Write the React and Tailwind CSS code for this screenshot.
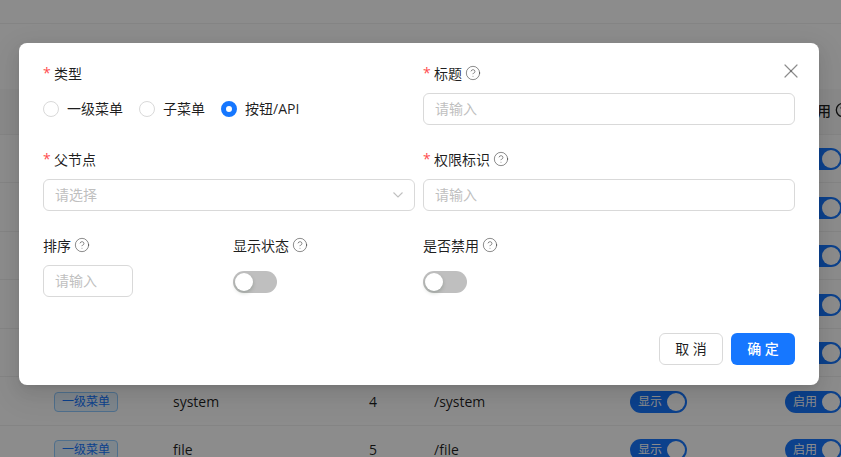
import React from 'react';
import { CircleHelp, X } from 'lucide-react';

const rows = [
  { tag: '一级菜单', name: 'dashboard', sort: 1, path: '/dashboard' },
  { tag: '一级菜单', name: 'user', sort: 1, path: '/user' },
  { tag: '一级菜单', name: 'role', sort: 2, path: '/role' },
  { tag: '一级菜单', name: 'menu', sort: 3, path: '/menu' },
  { tag: '一级菜单', name: 'log', sort: 3, path: '/log' },
  { tag: '一级菜单', name: 'system', sort: 4, path: '/system' },
  { tag: '一级菜单', name: 'file', sort: 5, path: '/file' },
];

function Help() {
  return <CircleHelp size={16} strokeWidth={1.5} className="ml-[3px] shrink-0 text-[#00000073]" />;
}

function Label({ text, required, help }) {
  return (
    <div className="flex items-center h-[22px] pb-[2px] mb-2 text-[14px] text-[#000000e0]">
      {required && <span className="mr-[4px] w-[7px] text-[14px] text-[#ff4d4f] leading-none">*</span>}
      <span>{text}</span>
      {help && <Help />}
    </div>
  );
}

function TextInput({ className = 'w-full' }) {
  return (
    <input
      placeholder="请输入"
      className={`${className} block h-8 px-[11px] pb-[2px] text-[14px] bg-white border border-[#d9d9d9] rounded-md outline-none placeholder:text-[#bfbfbf]`}
    />
  );
}

function Radio({ label, checked }) {
  return (
    <label className="flex items-center h-8 mr-4 text-[14px] text-[#000000e0]">
      {checked ? (
        <span className="w-4 h-4 rounded-full border-[5px] border-[#1677ff] bg-white" />
      ) : (
        <span className="w-4 h-4 rounded-full border border-[#d9d9d9] bg-white" />
      )}
      <span className="pl-2 pb-[2px]">{label}</span>
    </label>
  );
}

function OffSwitch() {
  return (
    <div className="flex items-center h-8 pt-[2px]">
      <div className="w-11 h-[22px] p-[2px] rounded-full bg-[#bfbfbf]">
        <div className="w-[18px] h-[18px] rounded-full bg-white shadow-[0_2px_4px_0_rgba(0,35,11,0.2)]" />
      </div>
    </div>
  );
}

function OnSwitch({ text }) {
  return (
    <div className="flex items-center justify-between w-[57px] h-[22px] pl-2 pr-[2px] rounded-full bg-[#1677ff] text-[12px] text-white">
      <span>{text}</span>
      <span className="w-[18px] h-[18px] rounded-full bg-white" />
    </div>
  );
}

function TableRow({ row }) {
  return (
    <div className="grid grid-cols-[173px_196px_65px_196px_155px_1fr] items-center h-[48.5px] pt-[2px] border-b border-[#f0f0f0] text-[14px] text-[#000000e0]">
      <div className="pl-[54px]">
        <span className="flex items-center justify-center w-16 h-5 rounded border border-[#91caff] bg-[#e6f4ff] text-[12px] text-[#1677ff]">
          {row.tag}
        </span>
      </div>
      <div className="leading-[22px]">{row.name}</div>
      <div className="leading-[22px]">{row.sort}</div>
      <div className="leading-[22px]">{row.path}</div>
      <OnSwitch text="显示" />
      <OnSwitch text="启用" />
    </div>
  );
}

export default function App() {
  return (
    <div
      className="relative w-[841px] h-[457px] overflow-hidden bg-white"
      style={{ fontFamily: '"Open Sans", "Noto Sans CJK SC", sans-serif' }}
    >
      {/* page behind the dialog */}
      <div className="h-6 border-b border-[#f0f0f0]" />
      <div className="h-[65px]" />
      <div className="flex items-center justify-end h-[45.5px] pb-[2px] border-b border-[#f0f0f0] bg-[#fafafa] text-[14px] font-medium text-[#000000e0]">
        <span className="whitespace-nowrap translate-x-[10px]">启用</span>
        <CircleHelp size={16} className="ml-1 shrink-0 translate-x-[10px]" />
      </div>
      {rows.map((row) => (
        <TableRow key={row.name} row={row} />
      ))}

      {/* mask + dialog */}
      <div className="absolute inset-0 bg-[#00000073] pl-[19px] pt-[43px]">
        <div className="relative w-[800px] h-[342px] px-6 py-5 rounded-lg bg-white shadow-[0_6px_16px_0_rgba(0,0,0,0.08),0_3px_6px_-4px_rgba(0,0,0,0.12),0_9px_28px_8px_rgba(0,0,0,0.05)]">
          <X size={24} strokeWidth={1.2} className="absolute top-4 right-4 text-[#00000073]" />

          <div className="grid grid-cols-[380px_372px]">
            <div className="pr-2 mb-6">
              <Label text="类型" required />
              <div className="flex items-center">
                <Radio label="一级菜单" />
                <Radio label="子菜单" />
                <Radio label="按钮/API" checked />
              </div>
            </div>
            <div className="mb-6">
              <Label text="标题" required help />
              <TextInput />
            </div>
            <div className="pr-2 mb-6">
              <Label text="父节点" required />
              <div className="flex items-center justify-between h-8 pl-[11px] pr-[10px] bg-white border border-[#d9d9d9] rounded-md text-[14px] text-[#bfbfbf]">
                <span className="pb-[2px]">请选择</span>
                <svg width="12" height="12" viewBox="0 0 12 12" fill="none" stroke="#00000040" strokeWidth="1.1">
                  <path d="M1.5 3.5 L6 8 L10.5 3.5" />
                </svg>
              </div>
            </div>
            <div className="mb-6">
              <Label text="权限标识" required help />
              <TextInput />
            </div>
          </div>

          <div className="grid grid-cols-[190px_190px_190px]">
            <div>
              <Label text="排序" help />
              <TextInput className="w-[90px]" />
            </div>
            <div>
              <Label text="显示状态" help />
              <OffSwitch />
            </div>
            <div>
              <Label text="是否禁用" help />
              <OffSwitch />
            </div>
          </div>

          <div className="mt-9 flex justify-end gap-2">
            <button className="w-16 h-8 pb-[2px] rounded-md border border-[#d9d9d9] bg-white text-[14px] text-[#000000e0]">取 消</button>
            <button className="w-16 h-8 pb-[2px] rounded-md bg-[#1677ff] text-[14px] font-medium text-white">确 定</button>
          </div>
        </div>
      </div>
    </div>
  );
}
